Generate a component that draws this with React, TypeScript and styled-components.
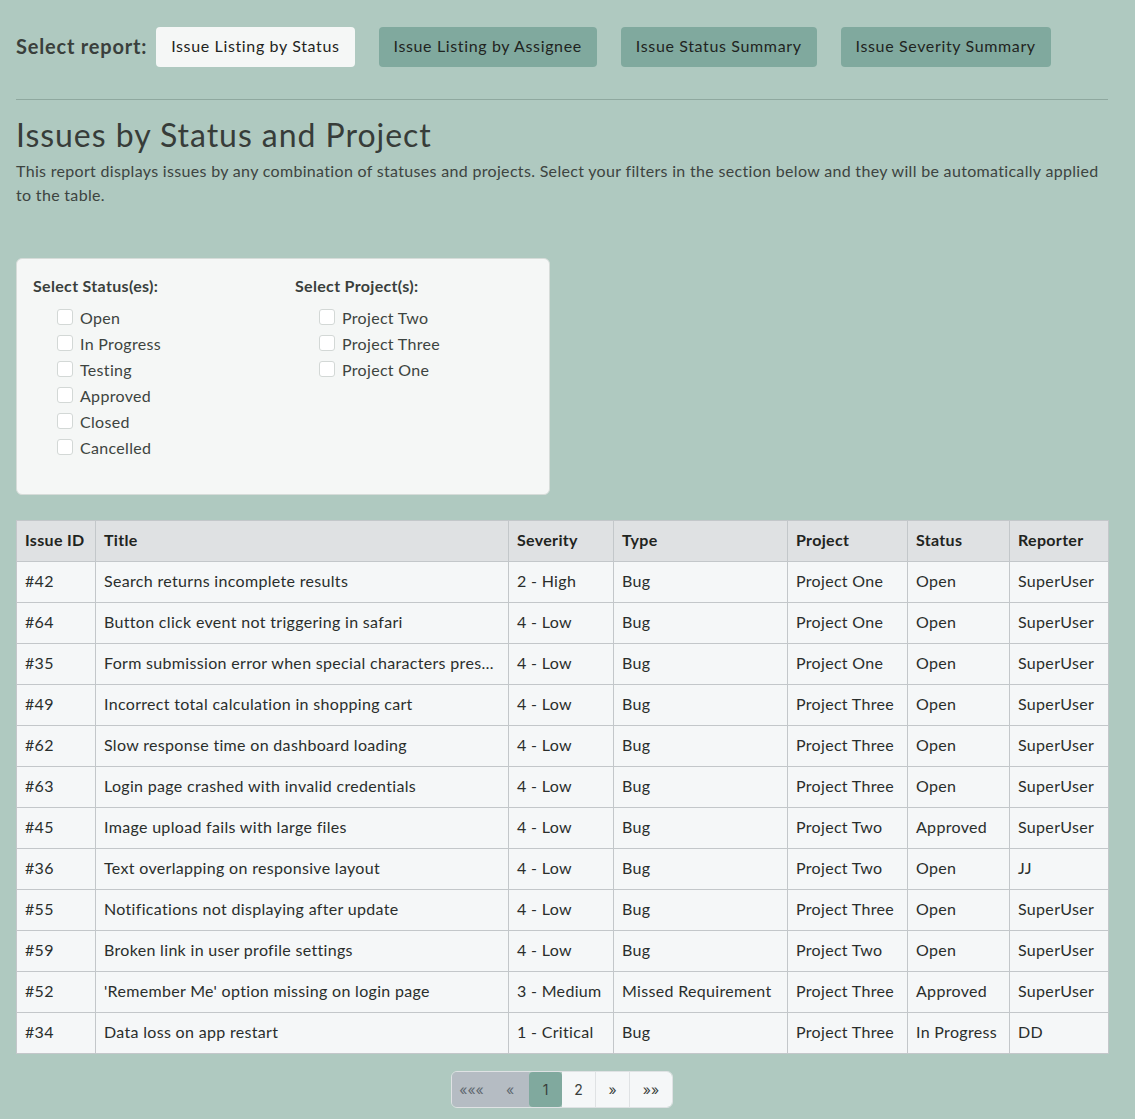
import React from "react";
import styled, { createGlobalStyle } from "styled-components";

const Global = createGlobalStyle`
  html, body { margin: 0; padding: 0; background: #afc9c0; }
  body { font-family: Lato, "Open Sans", sans-serif; color: #3a3f3c; letter-spacing: 0.02em; }
  * { box-sizing: border-box; }
`;

const Page = styled.div`
  padding: 27px 27px 12px 16px;
`;

const ReportBar = styled.div`
  display: flex;
  align-items: center;
  gap: 24px;
  height: 40px;
`;

const BarLabel = styled.span`
  font-size: 20px;
  font-weight: 700;
  letter-spacing: 0.04em;
  color: #3a3f3c;
  margin-right: -15px;
  padding-bottom: 3px;
`;

const ReportButton = styled.button<{ $active?: boolean }>`
  height: 40px;
  padding: 0 15px 3px;
  border: none;
  border-radius: 4px;
  font-family: inherit;
  letter-spacing: 0.04em;
  font-size: 16px;
  color: #1f2421;
  background: ${(p) => (p.$active ? "#f5f7f6" : "#80a99e")};
  cursor: pointer;
`;

const Rule = styled.hr`
  border: none;
  border-top: 1px solid #8fa89f;
  margin: 32px 0 16px;
`;

const Title = styled.h1`
  font-size: 32px;
  font-weight: 400;
  margin: 0;
  line-height: 38px;
  letter-spacing: 0.03em;
  color: #373c39;
`;

const Intro = styled.p`
  font-size: 16px;
  line-height: 24px;
  margin: 5px 0 0;
  color: #3d4440;
`;

const FilterCard = styled.div`
  margin-top: 51px;
  width: 534px;
  height: 237px;
  background: #f5f7f6;
  border: 1px solid #d6dcd9;
  border-radius: 6px;
  padding: 17px 16px;
  display: grid;
  grid-template-columns: 262px 1fr;
`;

const FilterGroup = styled.div`
  display: flex;
  flex-direction: column;
`;

const GroupLabel = styled.div`
  font-size: 16px;
  font-weight: 700;
  line-height: 20px;
  margin-bottom: 8px;
  color: #3a3f3c;
`;

const CheckRow = styled.label`
  display: flex;
  align-items: center;
  gap: 7px;
  height: 26px;
  padding-left: 24px;
  font-size: 16px;
  color: #3d4440;
`;

const Box = styled.input`
  appearance: none;
  margin: 0;
  width: 16px;
  height: 16px;
  border: 1px solid #d3d8d6;
  border-radius: 3px;
  background: #fff;
`;

const Table = styled.table`
  margin-top: 25px;
  width: 1092px;
  border-collapse: collapse;
  table-layout: fixed;
  font-size: 16px;
`;

const Th = styled.th`
  background: #dfe1e3;
  border: 1px solid #c3c7ca;
  height: 41px;
  padding: 0 8px 3px;
  text-align: left;
  font-weight: 700;
  color: #1f2421;
`;

const Td = styled.td`
  background: #f5f7f8;
  border: 1px solid #c3c7ca;
  height: 41px;
  padding: 0 8px 3px;
  color: #2a2e2c;
  white-space: nowrap;
  overflow: hidden;
  text-overflow: ellipsis;
`;

const Pager = styled.div`
  display: flex;
  justify-content: center;
  margin-top: 17px;
`;

const PageList = styled.div`
  display: flex;
  border-radius: 6px;
  overflow: hidden;
  border: 1px solid #dfe2e4;
  height: 37px;
`;

const PageBtn = styled.span<{ $kind: "disabled" | "active" | "normal"; $w: number }>`
  width: ${(p) => p.$w}px;
  display: flex;
  align-items: center;
  justify-content: center;
  font-size: 14px;
  letter-spacing: 0;
  font-family: Inter, sans-serif;
  color: ${(p) => (p.$kind === "disabled" ? "#5f6870" : "#3a3f3c")};
  background: ${(p) =>
    p.$kind === "disabled" ? "#b5bcc3" : p.$kind === "active" ? "#80a99e" : "#f5f7f8"};
  border-right: ${(p) => (p.$kind === "normal" ? "1px solid #dfe2e4" : "none")};
  border-radius: ${(p) => (p.$kind === "active" ? "4px" : "0")};
  &:last-child { border-right: none; }
`;

const statuses = ["Open", "In Progress", "Testing", "Approved", "Closed", "Cancelled"];
const projects = ["Project Two", "Project Three", "Project One"];

const cols = [
  { name: "Issue ID", w: 79 },
  { name: "Title", w: 413 },
  { name: "Severity", w: 105 },
  { name: "Type", w: 174 },
  { name: "Project", w: 120 },
  { name: "Status", w: 102 },
  { name: "Reporter", w: 99 },
];

const rows = [
  ["#42", "Search returns incomplete results", "2 - High", "Bug", "Project One", "Open", "SuperUser"],
  ["#64", "Button click event not triggering in safari", "4 - Low", "Bug", "Project One", "Open", "SuperUser"],
  ["#35", "Form submission error when special characters present in input", "4 - Low", "Bug", "Project One", "Open", "SuperUser"],
  ["#49", "Incorrect total calculation in shopping cart", "4 - Low", "Bug", "Project Three", "Open", "SuperUser"],
  ["#62", "Slow response time on dashboard loading", "4 - Low", "Bug", "Project Three", "Open", "SuperUser"],
  ["#63", "Login page crashed with invalid credentials", "4 - Low", "Bug", "Project Three", "Open", "SuperUser"],
  ["#45", "Image upload fails with large files", "4 - Low", "Bug", "Project Two", "Approved", "SuperUser"],
  ["#36", "Text overlapping on responsive layout", "4 - Low", "Bug", "Project Two", "Open", "JJ"],
  ["#55", "Notifications not displaying after update", "4 - Low", "Bug", "Project Three", "Open", "SuperUser"],
  ["#59", "Broken link in user profile settings", "4 - Low", "Bug", "Project Two", "Open", "SuperUser"],
  ["#52", "'Remember Me' option missing on login page", "3 - Medium", "Missed Requirement", "Project Three", "Approved", "SuperUser"],
  ["#34", "Data loss on app restart", "1 - Critical", "Bug", "Project Three", "In Progress", "DD"],
];

const pages: { t: string; k: "disabled" | "active" | "normal"; w: number }[] = [
  { t: "«««", k: "disabled", w: 39 },
  { t: "«", k: "disabled", w: 38 },
  { t: "1", k: "active", w: 33 },
  { t: "2", k: "normal", w: 34 },
  { t: "»", k: "normal", w: 34 },
  { t: "»»", k: "normal", w: 42 },
];

export default function App() {
  return (
    <Page>
      <Global />
      <ReportBar>
        <BarLabel>Select report:</BarLabel>
        <ReportButton $active>Issue Listing by Status</ReportButton>
        <ReportButton>Issue Listing by Assignee</ReportButton>
        <ReportButton>Issue Status Summary</ReportButton>
        <ReportButton>Issue Severity Summary</ReportButton>
      </ReportBar>
      <Rule />
      <Title>Issues by Status and Project</Title>
      <Intro>
        This report displays issues by any combination of statuses and projects. Select your filters in the
        section below and they will be automatically applied to the table.
      </Intro>
      <FilterCard>
        <FilterGroup>
          <GroupLabel>Select Status(es):</GroupLabel>
          {statuses.map((s) => (
            <CheckRow key={s}>
              <Box type="checkbox" />
              {s}
            </CheckRow>
          ))}
        </FilterGroup>
        <FilterGroup>
          <GroupLabel>Select Project(s):</GroupLabel>
          {projects.map((s) => (
            <CheckRow key={s}>
              <Box type="checkbox" />
              {s}
            </CheckRow>
          ))}
        </FilterGroup>
      </FilterCard>
      <Table>
        <colgroup>
          {cols.map((c) => (
            <col key={c.name} style={{ width: c.w }} />
          ))}
        </colgroup>
        <thead>
          <tr>
            {cols.map((c) => (
              <Th key={c.name}>{c.name}</Th>
            ))}
          </tr>
        </thead>
        <tbody>
          {rows.map((r) => (
            <tr key={r[0]}>
              {r.map((v, i) => (
                <Td key={i}>{v}</Td>
              ))}
            </tr>
          ))}
        </tbody>
      </Table>
      <Pager>
        <PageList>
          {pages.map((p) => (
            <PageBtn key={p.t} $kind={p.k} $w={p.w}>
              {p.t}
            </PageBtn>
          ))}
        </PageList>
      </Pager>
    </Page>
  );
}
